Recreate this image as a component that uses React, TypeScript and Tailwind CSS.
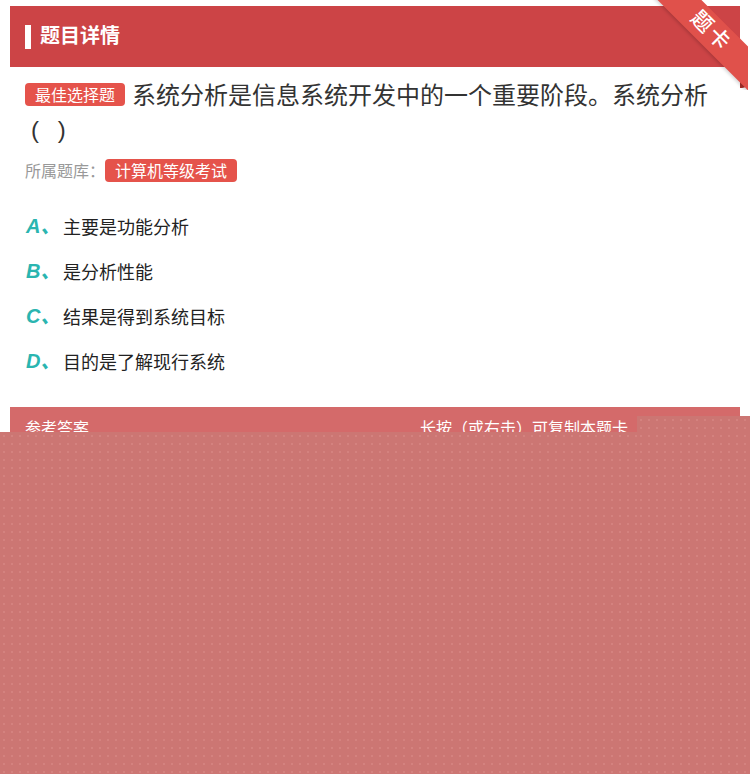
import React from "react";

const options = [
  { k: "A", t: "主要是功能分析" },
  { k: "B", t: "是分析性能" },
  { k: "C", t: "结果是得到系统目标" },
  { k: "D", t: "目的是了解现行系统" },
];

export default function App() {
  return (
    <div
      className="relative w-full min-h-[774px] bg-white overflow-hidden px-[10px] pt-[6px]"
      style={{ fontFamily: '"Noto Sans CJK SC", "Noto Sans", sans-serif' }}
    >
      {/* header */}
      <div className="h-[61px] bg-[#cc4446] flex items-center pl-[15px]">
        <div className="w-[6px] h-[24px] bg-white mr-[9px] mt-[1px]" />
        <div className="text-white text-[20px] font-bold leading-none -mt-[3px]">题目详情</div>
      </div>

      {/* ribbon */}
      <div className="absolute top-0 left-0 w-[748px] h-[90px] overflow-hidden pointer-events-none">
        <div className="absolute left-[740px] top-[50px] w-[8px] h-[38px] bg-[#a8302c] rounded-br-[6px]" />
        <div className="absolute left-[641px] top-[16px] w-[140px] h-[31px] bg-[#e0514b] rotate-45 flex items-center justify-center shadow-[0_2px_3px_rgba(0,0,0,0.15)]">
          <span className="text-white text-[21px] font-medium leading-none tracking-[3px] -translate-y-[2px]">题卡</span>
        </div>
      </div>

      {/* question */}
      <div className="px-[15px] pt-[9px]">
        <div className="text-[24px] leading-[36px] text-[#333]">
          <span className="inline-block align-top mt-[7px] bg-[#e5534b] text-white text-[16px] leading-[23px] px-[10px] rounded-[4px] mr-[7px]">
            最佳选择题
          </span>
          系统分析是信息系统开发中的一个重要阶段。系统分析
          <span
            className="inline-block align-top h-[36px] leading-[36px] pl-[6px] tracking-[6px]"
            style={{ fontFamily: '"Liberation Sans", Arial, sans-serif' }}
          >
            ( )
          </span>
        </div>
        <div className="mt-[10px] flex items-center h-[24px]">
          <span className="text-[16px] text-[#999] leading-none">所属题库：</span>
          <span className="bg-[#e5534b] text-white text-[16px] leading-[23px] px-[10px] rounded-[4px]">
            计算机等级考试
          </span>
        </div>

        <div className="mt-[21px]">
          {options.map((o) => (
            <div key={o.k} className="h-[45px] flex items-center">
              <span
                className="w-[38px] pl-[1px] text-[20px] font-bold italic text-[#2ab5b0] leading-none"
                style={{ fontFamily: '"Liberation Sans", Arial, "Noto Sans CJK SC", sans-serif' }}
              >
                {o.k}、
              </span>
              <span className="text-[18px] text-[#222] leading-none">{o.t}</span>
            </div>
          ))}
        </div>
      </div>

      {/* answer bar */}
      <div className="mt-[24px] h-[45px] bg-[#d46a6a] flex items-center justify-between pl-[15px] pr-[112px] text-white text-[16px]">
        <span className="-mt-[6px]">参考答案</span>
        <span className="-mt-[6px]">长按（或右击）可复制本题卡</span>
      </div>

      {/* masking overlays */}
      <div className="absolute left-0 right-0 top-[432px] bottom-0 bg-[#cc7673] bg-[radial-gradient(circle,#d4827f_1px,transparent_1.3px)] bg-[length:8px_8px]" />
      <div className="absolute left-[637px] right-0 top-[416px] bottom-0 bg-[#cc7673] bg-[radial-gradient(circle,#d4827f_1px,transparent_1.3px)] bg-[length:8px_8px]" />
    </div>
  );
}
